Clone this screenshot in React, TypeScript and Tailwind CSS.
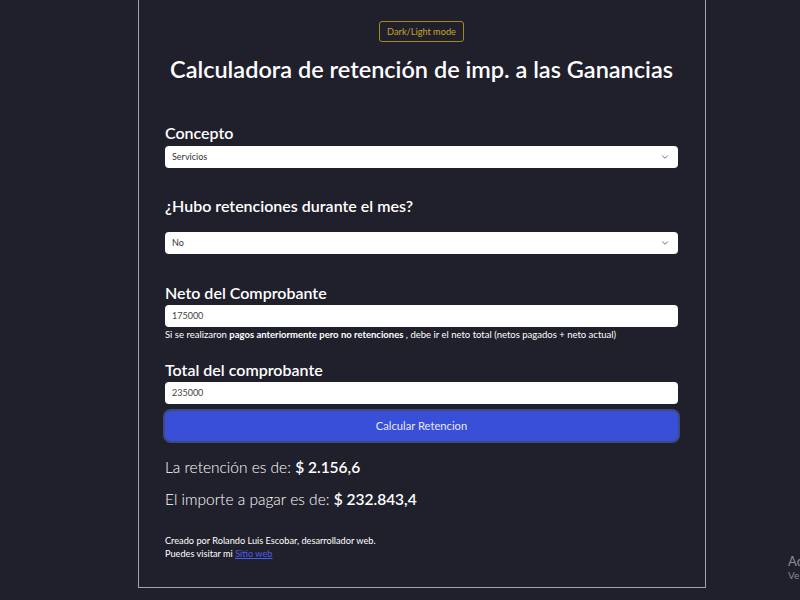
import { ChevronDown } from "lucide-react";

function Select({ value }: { value: string }) {
  return (
    <div className="flex h-[22px] items-center justify-between rounded-[4px] bg-white pl-[7px] pr-[8px] text-[9px] text-[#333]">
      <span>{value}</span>
      <ChevronDown className="h-[10px] w-[10px] text-[#555]" strokeWidth={2} />
    </div>
  );
}

function Input({ value }: { value: string }) {
  return (
    <div className="flex h-[22px] items-center rounded-[4px] bg-white pl-[7px] text-[9px] text-[#444]">
      {value}
    </div>
  );
}

export default function App() {
  return (
    <div
      className="relative h-[600px] w-[800px] overflow-hidden bg-[#20202c] text-white"
      style={{ fontFamily: '"Segoe UI", Lato, sans-serif' }}
    >
      <div className="ml-[138px] mt-[-2px] flex w-[568px] flex-col border border-[#a3a3b0] pb-[27px] pl-[26px] pr-[27px]">
        <div className="mt-[22px] flex justify-center">
          <button className="h-[21px] rounded-[3px] border border-[#a8871a] px-[7px] text-[9.2px] text-[#c9a227]">
            Dark/Light mode
          </button>
        </div>
        <h1 className="mt-[12px] text-center text-[23.5px] font-semibold leading-[30px]">
          Calculadora de retención de imp. a las Ganancias
        </h1>

        <label className="mt-[38px] text-[16px] font-semibold leading-[22px]">Concepto</label>
        <div className="mt-[2px]">
          <Select value="Servicios" />
        </div>

        <label className="mt-[27px] text-[16px] font-semibold leading-[22px]">
          ¿Hubo retenciones durante el mes?
        </label>
        <div className="mt-[15px]">
          <Select value="No" />
        </div>

        <label className="mt-[28px] text-[16px] font-semibold leading-[22px]">Neto del Comprobante</label>
        <div className="mt-[1px]">
          <Input value="175000" />
        </div>
        <p className="mt-[2px] text-[9.5px] leading-[12px]">
          Si se realizaron <b>pagos anteriormente pero no retenciones</b> , debe ir el neto total (netos pagados + neto actual)
        </p>

        <label className="mt-[18px] text-[16px] font-semibold leading-[22px]">Total del comprobante</label>
        <div className="mt-[1px]">
          <Input value="235000" />
        </div>
        <button className="mt-[7px] h-[30px] shrink-0 rounded-[6px] bg-[#3a4fd8] text-[11.2px] text-[#e6e8ff] shadow-[0_0_0_2px_rgba(90,105,200,0.55)]">
          Calcular Retencion
        </button>

        <p className="mt-[14px] text-[15.5px] font-light leading-[24px]">
          La retención es de: <span className="font-semibold">$ 2.156,6</span>
        </p>
        <p className="mt-[8px] text-[15.5px] font-light leading-[24px]">
          El importe a pagar es de: <span className="font-semibold">$ 232.843,4</span>
        </p>

        <p className="mt-[23px] text-[9.2px] leading-[13px]">
          Creado por Rolando Luis Escobar, desarrollador web.
          <br />
          Puedes visitar mi{" "}
          <a href="#" className="text-[#4a5cf0] underline">
            Sitio web
          </a>
        </p>
      </div>

      <div className="absolute left-[788px] top-[553px] w-[12px] overflow-hidden whitespace-nowrap text-[#8a8a96]">
        <div className="text-[13px] leading-[16px]">Ac</div>
        <div className="text-[10px] leading-[12px]">Ve</div>
      </div>
    </div>
  );
}
